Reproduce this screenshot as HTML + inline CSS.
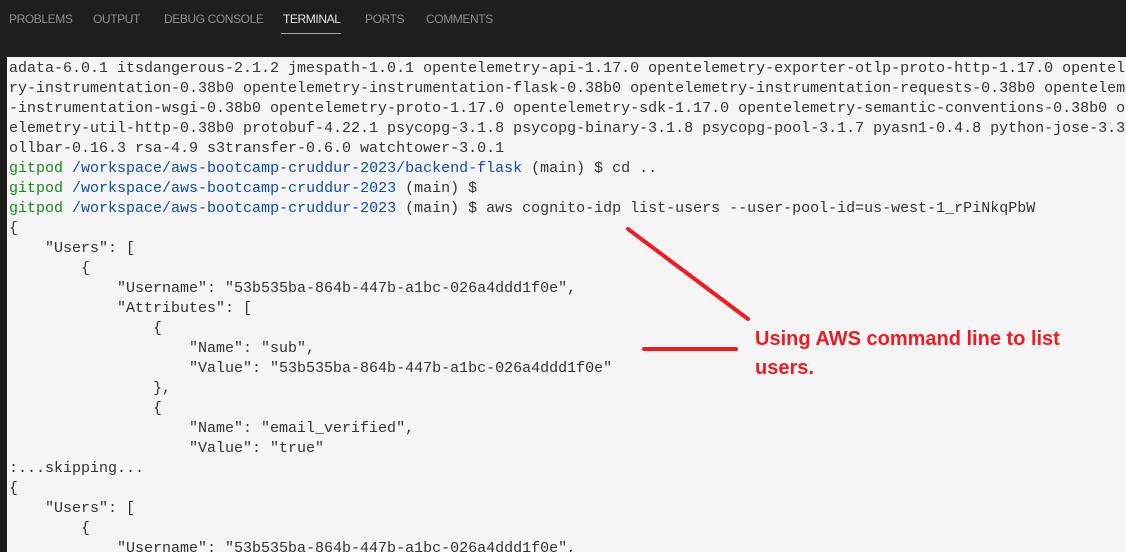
<!DOCTYPE html>
<html><head><meta charset="utf-8"><style>
html,body{margin:0;padding:0;width:1126px;height:552px;overflow:hidden;background:#1f1e1c;}
.tabs{position:absolute;left:0;top:0;width:1126px;height:57px;background:#1f1e1c;font-family:"Liberation Sans",sans-serif;font-size:12px;letter-spacing:-0.4px;color:#8f8d89;}
.tab{position:absolute;top:12px;}
.act{color:#e6e4df;}
.ul{position:absolute;left:281px;top:33px;width:60px;height:1px;background:#a8a49c;}
.term{position:absolute;left:7px;top:57px;width:1119px;height:495px;background:#f5f5f5;overflow:hidden;}
pre{margin:0;position:absolute;left:2px;top:2px;font-family:"Liberation Mono",monospace;font-size:15px;line-height:20px;color:#333;white-space:pre;}
.g{color:#188a18;}.b{color:#0d4ea6;}
.note{position:absolute;left:755px;font-family:"Comic Sans MS","Liberation Sans",sans-serif;font-weight:bold;font-size:20px;color:#ed1c24;}
</style></head><body>
<div class="tabs">
<span class="tab" style="left:9px">PROBLEMS</span>
<span class="tab" style="left:93px">OUTPUT</span>
<span class="tab" style="left:164px">DEBUG CONSOLE</span>
<span class="tab act" style="left:283px">TERMINAL</span>
<span class="tab" style="left:365px">PORTS</span>
<span class="tab" style="left:426px">COMMENTS</span>
<div class="ul"></div>
</div>
<div class="term">
<pre>adata-6.0.1 itsdangerous-2.1.2 jmespath-1.0.1 opentelemetry-api-1.17.0 opentelemetry-exporter-otlp-proto-http-1.17.0 opentelemetry
ry-instrumentation-0.38b0 opentelemetry-instrumentation-flask-0.38b0 opentelemetry-instrumentation-requests-0.38b0 opentelemetry
-instrumentation-wsgi-0.38b0 opentelemetry-proto-1.17.0 opentelemetry-sdk-1.17.0 opentelemetry-semantic-conventions-0.38b0 opent
elemetry-util-http-0.38b0 protobuf-4.22.1 psycopg-3.1.8 psycopg-binary-3.1.8 psycopg-pool-3.1.7 pyasn1-0.4.8 python-jose-3.3.0
ollbar-0.16.3 rsa-4.9 s3transfer-0.6.0 watchtower-3.0.1
<span class="g">gitpod</span> <span class="b">/workspace/aws-bootcamp-cruddur-2023/backend-flask</span> (main) $ cd ..
<span class="g">gitpod</span> <span class="b">/workspace/aws-bootcamp-cruddur-2023</span> (main) $ 
<span class="g">gitpod</span> <span class="b">/workspace/aws-bootcamp-cruddur-2023</span> (main) $ aws cognito-idp list-users --user-pool-id=us-west-1_rPiNkqPbW
{
    "Users": [
        {
            "Username": "53b535ba-864b-447b-a1bc-026a4ddd1f0e",
            "Attributes": [
                {
                    "Name": "sub",
                    "Value": "53b535ba-864b-447b-a1bc-026a4ddd1f0e"
                },
                {
                    "Name": "email_verified",
                    "Value": "true"
:...skipping...
{
    "Users": [
        {
            "Username": "53b535ba-864b-447b-a1bc-026a4ddd1f0e",</pre>
</div>
<svg style="position:absolute;left:0;top:0" width="1126" height="552">
<line x1="628" y1="229" x2="748" y2="319" stroke="#ed1c24" stroke-width="4" stroke-linecap="round"/>
<line x1="644" y1="349" x2="736" y2="349" stroke="#ed1c24" stroke-width="4" stroke-linecap="round"/>
</svg>
<div class="note" style="top:328px">Using AWS command line to list</div>
<div class="note" style="top:357px">users.</div>
</body></html>
